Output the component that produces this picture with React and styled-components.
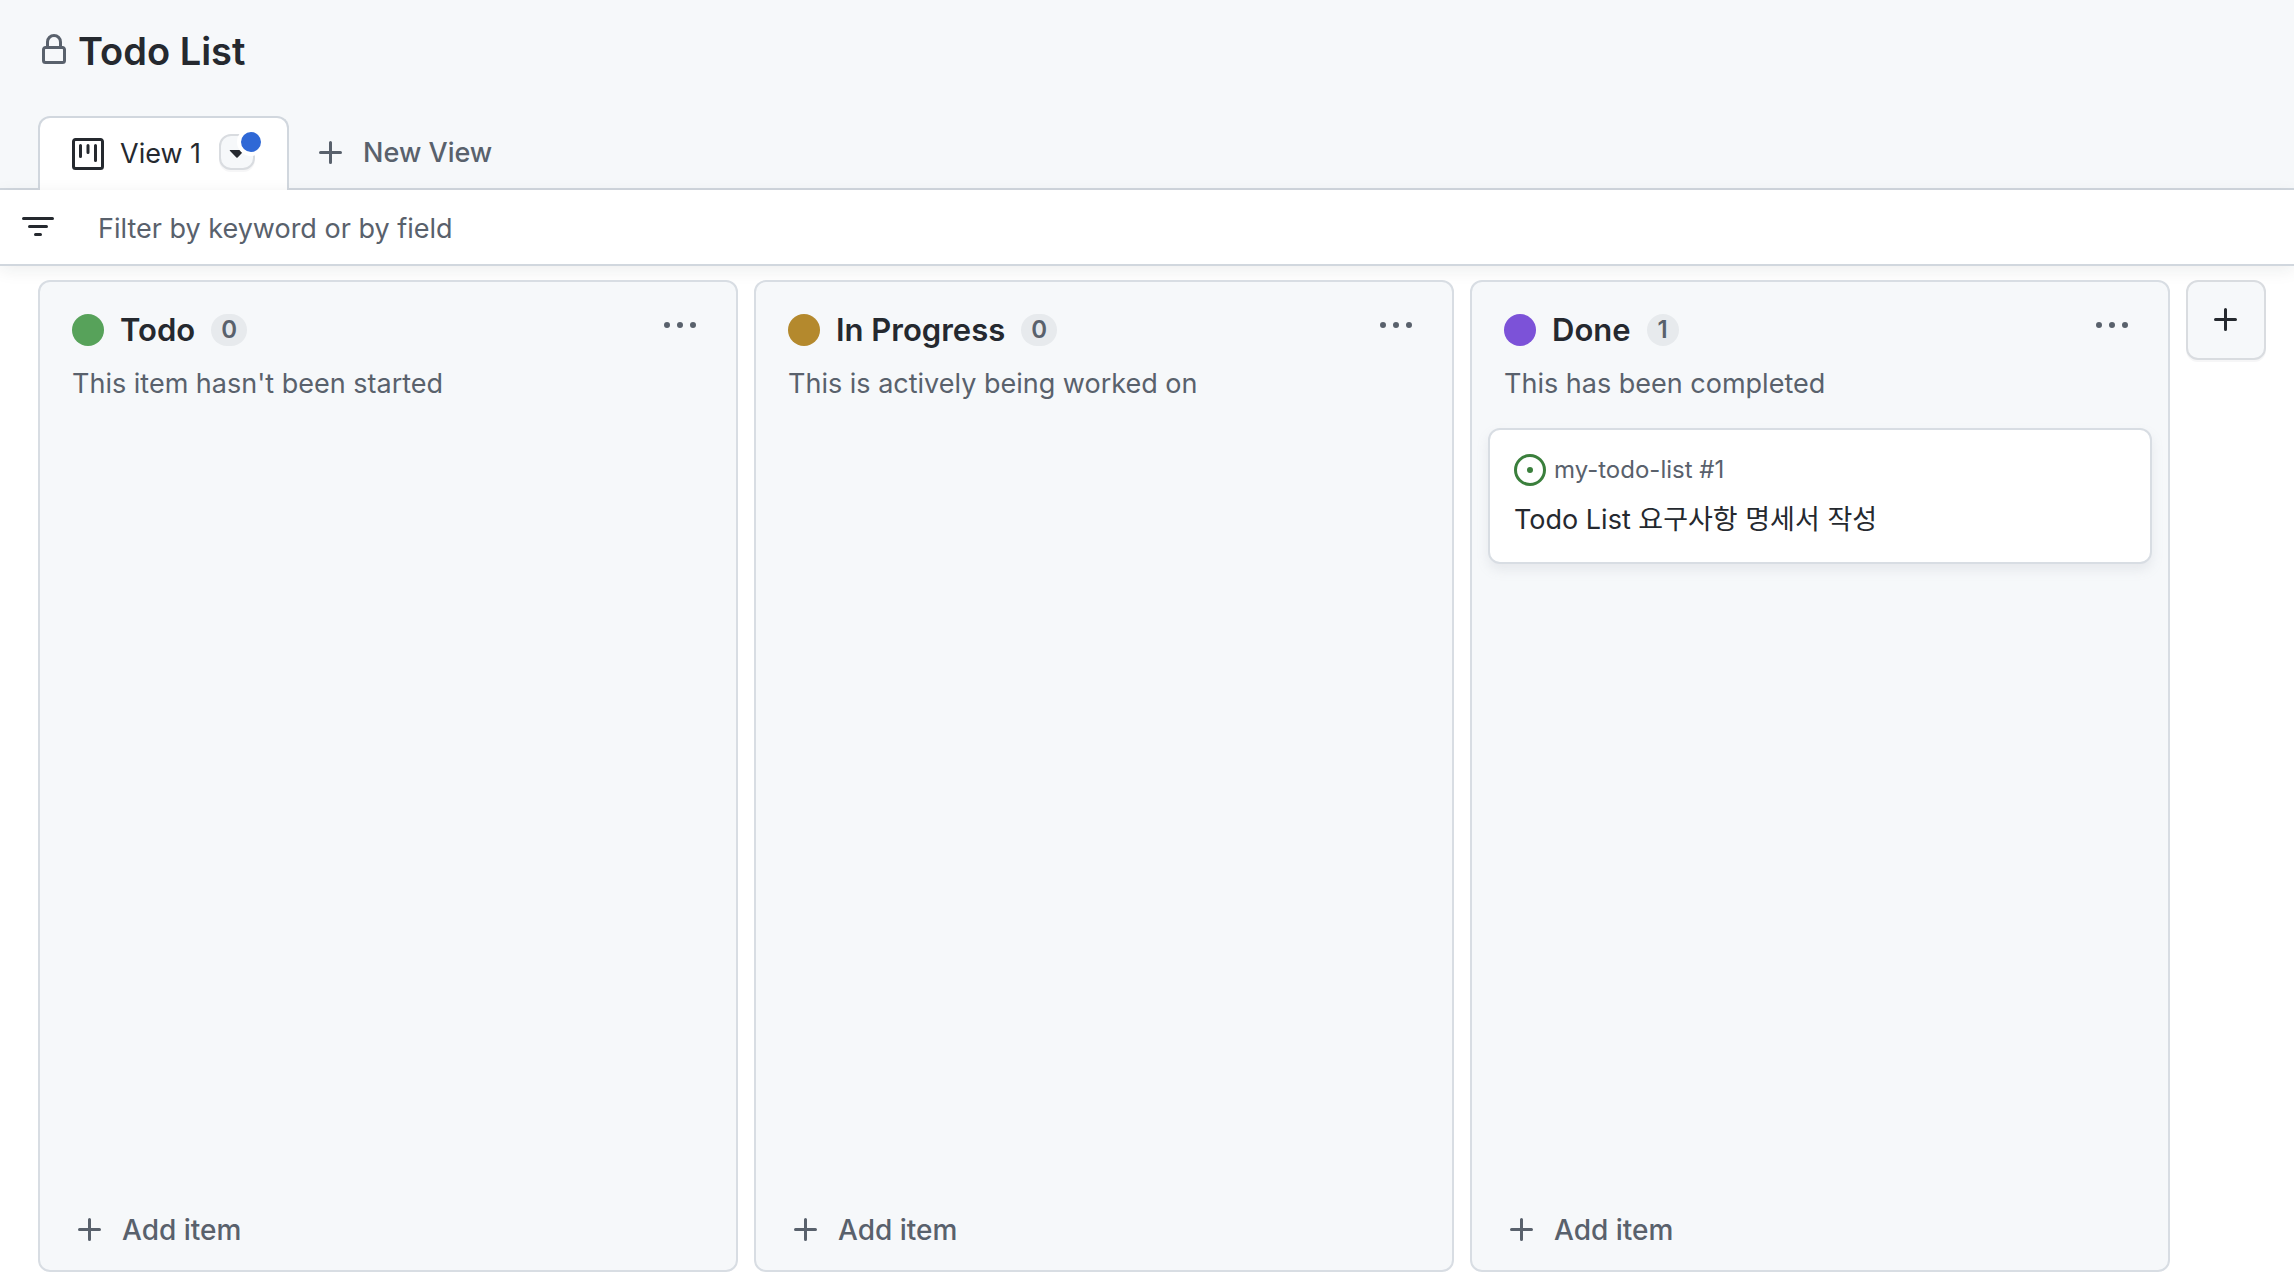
import styled, { createGlobalStyle } from 'styled-components'

const columns = [
  { id: 'todo', name: 'Todo', color: '#57a25a', description: "This item hasn't been started", items: [] },
  { id: 'progress', name: 'In Progress', color: '#b4892d', description: 'This is actively being worked on', items: [] },
  {
    id: 'done',
    name: 'Done',
    color: '#7c52d8',
    description: 'This has been completed',
    items: [{ id: 1, repo: 'my-todo-list', title: 'Todo List 요구사항 명세서 작성' }]
  }
]

const paths = {
  lock: 'M4 4a4 4 0 0 1 8 0v2h.25c.966 0 1.75.784 1.75 1.75v5.5A1.75 1.75 0 0 1 12.25 15h-8.5A1.75 1.75 0 0 1 2 13.25v-5.5C2 6.784 2.784 6 3.75 6H4Zm8.25 3.5h-8.5a.25.25 0 0 0-.25.25v5.5c0 .138.112.25.25.25h8.5a.25.25 0 0 0 .25-.25v-5.5a.25.25 0 0 0-.25-.25ZM10.5 6V4a2.5 2.5 0 1 0-5 0v2Z',
  board: 'M1.75 0h12.5C15.216 0 16 .784 16 1.75v12.5A1.75 1.75 0 0 1 14.25 16H1.75A1.75 1.75 0 0 1 0 14.25V1.75C0 .784.784 0 1.75 0ZM1.5 1.75v12.5c0 .138.112.25.25.25h12.5a.25.25 0 0 0 .25-.25V1.75a.25.25 0 0 0-.25-.25H1.75a.25.25 0 0 0-.25.25ZM11.75 3a.75.75 0 0 1 .75.75v7.5a.75.75 0 0 1-1.5 0v-7.5a.75.75 0 0 1 .75-.75Zm-8.25.75a.75.75 0 0 1 1.5 0v5.5a.75.75 0 0 1-1.5 0ZM8 3a.75.75 0 0 1 .75.75v3.5a.75.75 0 0 1-1.5 0v-3.5A.75.75 0 0 1 8 3Z',
  filter: 'M.75 3h14.5a.75.75 0 0 1 0 1.5H.75a.75.75 0 0 1 0-1.5ZM3 7.75A.75.75 0 0 1 3.75 7h8.5a.75.75 0 0 1 0 1.5h-8.5A.75.75 0 0 1 3 7.75Zm3 4a.75.75 0 0 1 .75-.75h2.5a.75.75 0 0 1 0 1.5h-2.5a.75.75 0 0 1-.75-.75Z',
  plus: 'M7.75 2a.75.75 0 0 1 .75.75V7h4.25a.75.75 0 0 1 0 1.5H8.5v4.25a.75.75 0 0 1-1.5 0V8.5H2.75a.75.75 0 0 1 0-1.5H7V2.75A.75.75 0 0 1 7.75 2Z',
  kebab: 'M8 9a1.5 1.5 0 1 0 0-3 1.5 1.5 0 0 0 0 3ZM1.5 9a1.5 1.5 0 1 0 0-3 1.5 1.5 0 0 0 0 3Zm13 0a1.5 1.5 0 1 0 0-3 1.5 1.5 0 0 0 0 3Z',
  caret: 'm4.427 7.427 3.396 3.396a.25.25 0 0 0 .354 0l3.396-3.396A.25.25 0 0 0 11.396 7H4.604a.25.25 0 0 0-.177.427Z',
  issue: 'M8 9.5a1.5 1.5 0 1 0 0-3 1.5 1.5 0 0 0 0 3ZM8 0a8 8 0 1 1 0 16A8 8 0 0 1 8 0ZM1.5 8a6.5 6.5 0 1 0 13 0 6.5 6.5 0 0 0-13 0Z'
}

const Icon = ({ name, color = 'currentColor' }) => (
  <IconSvg viewBox="0 0 16 16" fill={color} aria-hidden="true">
    <path d={paths[name]} />
  </IconSvg>
)

const Column = ({ column }) => (
  <ColumnBox>
    <ColumnHeader>
      <TitleRow>
        <Dot $color={column.color} />
        <ColumnName>{column.name}</ColumnName>
        <Counter>{column.items.length}</Counter>
      </TitleRow>
      <MenuButton type="button" aria-label={`Actions for ${column.name}`}>
        <Icon name="kebab" />
      </MenuButton>
    </ColumnHeader>
    <Description>{column.description}</Description>
    <CardList>
      {column.items.map((item) => (
        <Card key={item.id}>
          <CardMeta>
            <Icon name="issue" color="#3a7f3c" />
            {item.repo} #{item.id}
          </CardMeta>
          <CardTitle>{item.title}</CardTitle>
        </Card>
      ))}
    </CardList>
    <AddItem type="button">
      <Icon name="plus" />
      Add item
    </AddItem>
  </ColumnBox>
)

const App = () => {
  return (
    <Page>
      <GlobalStyle />
      <Header>
        <Heading>
          <Icon name="lock" color="#59616c" />
          <h1>Todo List</h1>
        </Heading>
        <Tabs>
          <Tab>
            <TabLink href="#view-1" aria-current="page">
              <Icon name="board" />
              View 1
            </TabLink>
            <ViewOptions type="button" aria-label="View options">
              <Icon name="caret" />
              <Unsaved />
            </ViewOptions>
          </Tab>
          <NewView type="button">
            <Icon name="plus" />
            New View
          </NewView>
        </Tabs>
      </Header>
      <FilterBar>
        <Icon name="filter" />
        <input type="text" aria-label="Filter" placeholder="Filter by keyword or by field" />
      </FilterBar>
      <Board>
        {columns.map((column) => (
          <Column key={column.id} column={column} />
        ))}
        <AddColumn type="button" aria-label="Add column">
          <Icon name="plus" />
        </AddColumn>
      </Board>
    </Page>
  )
}

const GlobalStyle = createGlobalStyle`
* {
  box-sizing: border-box;
}
body {
  margin: 0;
  background: #fff;
  color: #25292f;
  font-family: Inter, "Noto Sans CJK KR", sans-serif;
  font-size: 27px;
  line-height: 40px;
}
h1, h2, p {
  margin: 0;
}
button, input {
  font: inherit;
  color: inherit;
  border: 0;
  padding: 0;
  background: none;
}
button {
  cursor: pointer;
}
`
const IconSvg = styled.svg`
  display: block;
  flex-shrink: 0;
  width: 32px;
  height: 32px;
`
const Page = styled.div`
  display: flex;
  flex-direction: column;
  min-height: 100vh;
`
const Header = styled.header`
  background: #f6f8fa;
  border-bottom: 2px solid #d1d7de;
`
const Heading = styled.div`
  display: flex;
  align-items: center;
  gap: 8px;
  height: 100px;
  padding: 0 38px;
  h1 {
    padding-top: 2px;
    font-size: 38px;
    line-height: 48px;
    font-weight: 600;
  }
`
const Tabs = styled.nav`
  display: flex;
  margin: 16px 38px -2px;
`
const Tab = styled.div`
  display: flex;
  align-items: center;
  gap: 18px;
  height: 74px;
  padding: 0 32px;
  background: #fff;
  border: 2px solid #d1d7de;
  border-bottom: 0;
  border-radius: 12px 12px 0 0;
`
const TabLink = styled.a`
  display: flex;
  align-items: center;
  gap: 16px;
  color: inherit;
  text-decoration: none;
`
const ViewOptions = styled.button`
  position: relative;
  display: flex;
  align-items: center;
  justify-content: center;
  width: 36px;
  height: 36px;
  margin-bottom: 4px;
  background: #f6f8fa;
  border: 2px solid #d9dce0;
  border-radius: 12px;
  box-shadow: 0 2px 0 rgba(31, 35, 40, 0.04);
`
const Unsaved = styled.span`
  position: absolute;
  top: -8px;
  right: -12px;
  width: 28px;
  height: 28px;
  background: #2f68d6;
  border: 4px solid #fff;
  border-radius: 50%;
`
const NewView = styled.button`
  display: flex;
  align-items: center;
  gap: 16px;
  padding: 0 26px;
  color: #59616c;
  font-weight: 500;
`
const FilterBar = styled.div`
  display: flex;
  align-items: center;
  gap: 44px;
  height: 76px;
  padding: 0 22px;
  border-bottom: 2px solid #d1d7de;
  box-shadow: 0 4px 16px rgba(31, 35, 40, 0.08);
  input {
    flex: 1;
    padding-top: 4px;
    outline: 0;
  }
  input::placeholder {
    color: #59616c;
    opacity: 1;
  }
`
const Board = styled.main`
  display: flex;
  flex: 1;
  gap: 16px;
  padding: 14px 28px 10px 38px;
`
const ColumnBox = styled.section`
  display: flex;
  flex: 1;
  flex-direction: column;
  min-width: 0;
  background: #f6f8fa;
  border: 2px solid #d8dde3;
  border-radius: 12px;
`
const ColumnHeader = styled.div`
  display: flex;
  justify-content: space-between;
  padding: 28px 40px 0 32px;
`
const TitleRow = styled.div`
  display: flex;
  align-items: center;
  gap: 16px;
`
const Dot = styled.span`
  width: 32px;
  height: 32px;
  background: ${(props) => props.$color};
  border-radius: 50%;
`
const ColumnName = styled.h2`
  font-size: 31px;
  line-height: 40px;
  font-weight: 600;
`
const Counter = styled.span`
  min-width: 32px;
  padding: 0 10px;
  background: #e7eaed;
  border-radius: 32px;
  color: #59616c;
  font-size: 24px;
  line-height: 32px;
  font-weight: 600;
  text-align: center;
`
const MenuButton = styled.button`
  height: 32px;
  color: #59616c;
`
const Description = styled.p`
  padding: 14px 32px 0;
  color: #59616c;
`
const CardList = styled.div`
  flex: 1;
  padding: 24px 16px;
`
const Card = styled.article`
  padding: 20px 24px 22px;
  background: #fff;
  border: 2px solid #d8dde3;
  border-radius: 12px;
  box-shadow: 0 6px 12px rgba(140, 149, 159, 0.15);
`
const CardMeta = styled.div`
  display: flex;
  align-items: center;
  gap: 8px;
  color: #59616c;
  font-size: 24px;
`
const CardTitle = styled.p`
  padding-top: 10px;
`
const AddItem = styled.button`
  display: flex;
  align-items: center;
  gap: 16px;
  height: 80px;
  padding: 0 34px;
  color: #59616c;
  font-size: 28px;
  font-weight: 500;
`
const AddColumn = styled.button`
  display: flex;
  align-items: center;
  justify-content: center;
  width: 80px;
  height: 80px;
  background: #f6f8fa;
  border: 2px solid #d9dce0;
  border-radius: 12px;
  box-shadow: 0 2px 0 rgba(31, 35, 40, 0.04);
`
export default App
